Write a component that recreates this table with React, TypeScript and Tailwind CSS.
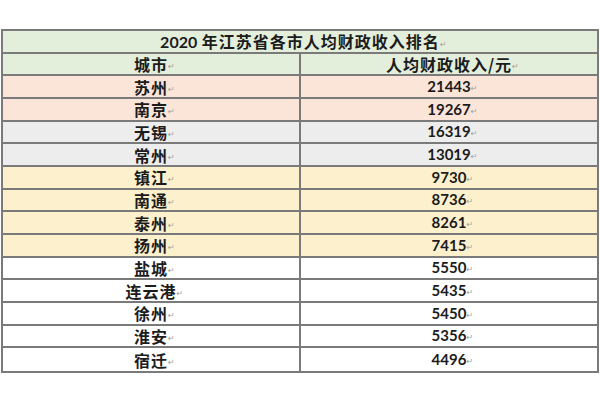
const rows: { city: string; value: string; bg: string }[] = [
  { city: "苏州", value: "21443", bg: "bg-[#fbe4d8]" },
  { city: "南京", value: "19267", bg: "bg-[#fbe4d8]" },
  { city: "无锡", value: "16319", bg: "bg-[#ededed]" },
  { city: "常州", value: "13019", bg: "bg-[#ededed]" },
  { city: "镇江", value: "9730", bg: "bg-[#fdf1cd]" },
  { city: "南通", value: "8736", bg: "bg-[#fdf1cd]" },
  { city: "泰州", value: "8261", bg: "bg-[#fdf1cd]" },
  { city: "扬州", value: "7415", bg: "bg-[#fdf1cd]" },
  { city: "盐城", value: "5550", bg: "bg-white" },
  { city: "连云港", value: "5435", bg: "bg-white" },
  { city: "徐州", value: "5450", bg: "bg-white" },
  { city: "淮安", value: "5356", bg: "bg-white" },
  { city: "宿迁", value: "4496", bg: "bg-white" },
]

const cjk = "font-['Noto_Sans_CJK_SC',sans-serif] tracking-[1px]"
const num = "font-['Lato','Noto_Sans_CJK_SC',sans-serif]"

// little paragraph mark left behind by the word processor
const Mark = ({ children, className }: { children: React.ReactNode; className: string }) => (
  <span className={`relative leading-none ${className}`}>
    {children}
    <span className="absolute left-full bottom-[1px] text-[8px] leading-none tracking-normal text-[#a0a0a0] font-['DejaVu_Sans',sans-serif] font-normal">
      ↵
    </span>
  </span>
)

export default function App() {
  return (
    <div className="w-[600px] h-[400px] bg-white pt-[29px]">
      <div className="ml-[1px] w-[598px] border-2 border-[#7a7a7a] text-[#1c1c1c]">
        <div className="h-[22.67px] border-b-2 border-[#7a7a7a] bg-[#e3eedb] flex items-center justify-center">
          <Mark className="text-[16px] font-bold">
            <span className={num}>2020</span>
            <span className={cjk}> 年江苏省各市人均财政收入排名</span>
          </Mark>
        </div>

        <div className="grid grid-cols-[298px_1fr] h-[22.67px] border-b-2 border-[#7a7a7a] bg-[#e3eedb]">
          <div className="border-r-2 border-[#7a7a7a] flex items-center justify-center">
            <Mark className={`${cjk} text-[16px] font-bold`}>城市</Mark>
          </div>
          <div className="flex items-center justify-center">
            <Mark className={`${cjk} text-[16px] font-bold`}>人均财政收入/元</Mark>
          </div>
        </div>

        {rows.map((r, i) => (
          <div
            key={r.city}
            className={`grid grid-cols-[298px_1fr] h-[22.67px] ${r.bg} ${i < rows.length - 1 ? "border-b-2 border-[#7a7a7a]" : ""}`}
          >
            <div className="border-r-2 border-[#7a7a7a] flex items-center justify-center">
              <Mark className={`${cjk} text-[16px] font-bold`}>{r.city}</Mark>
            </div>
            <div className="flex items-center justify-center">
              <Mark className={`${num} text-[15px] font-bold`}>{r.value}</Mark>
            </div>
          </div>
        ))}
      </div>
    </div>
  )
}
